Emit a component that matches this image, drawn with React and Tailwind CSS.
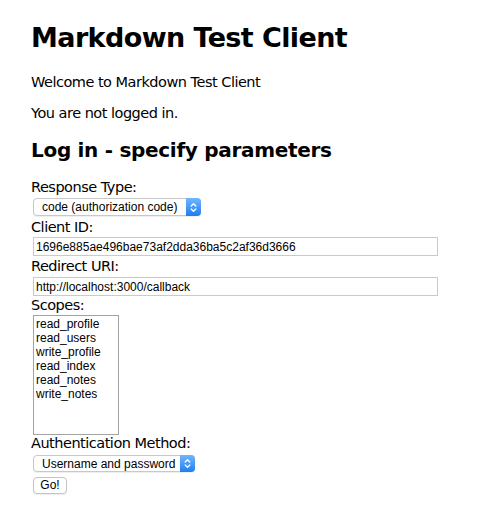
import React from 'react';

const scopes = ['read_profile', 'read_users', 'write_profile', 'read_index', 'read_notes', 'write_notes'];

function Arrows() {
  return (
    <span className="absolute -right-px -top-px -bottom-px w-[15px] rounded-r-[4px] bg-gradient-to-b from-[#6fb6fc] to-[#1a7ef5] flex items-center justify-center pointer-events-none">
      <svg width="7" height="11" viewBox="0 0 7 11" fill="none" stroke="white" strokeWidth="1.3" strokeLinecap="round" strokeLinejoin="round">
        <path d="M1.2 4 L3.5 1.7 L5.8 4" />
        <path d="M1.2 7 L3.5 9.3 L5.8 7" />
      </svg>
    </span>
  );
}

// fake mac-style popup button
function Select({ value, className }) {
  return (
    <div
      role="combobox"
      className={`relative ml-[2px] flex items-center rounded-[4px] border border-[#c8c8c8] bg-white pl-[8px] text-[12px] text-black shadow-[0_1px_1px_rgba(0,0,0,0.07)] font-['Liberation_Sans',Arial,sans-serif] ${className}`}
    >
      <span className="leading-[14px]">{value}</span>
      <Arrows />
    </div>
  );
}

function Label({ children, className = '' }) {
  return <div className={`h-[19px] leading-[19px] text-[14.5px] tracking-[-0.5px] ${className}`}>{children}</div>;
}

function TextInput({ value, className = '' }) {
  return (
    <input
      readOnly
      value={value}
      className={`block ml-[2px] w-[405px] h-[19px] border border-[#cacaca] px-[2px] text-[12px] text-black outline-none font-['Liberation_Sans',Arial,sans-serif] ${className}`}
    />
  );
}

export default function App() {
  return (
    <div className="min-h-screen bg-white text-black px-[31px] font-['DejaVu_Sans','Verdana',sans-serif]">
      <h1 className="pt-[22px] text-[27px] leading-[32px] font-bold tracking-[-0.6px]">Markdown Test Client</h1>
      <p className="mt-[19px] text-[14.5px] leading-[18px] tracking-[-0.5px]">Welcome to Markdown Test Client</p>
      <p className="mt-[13px] text-[14.5px] leading-[18px] tracking-[-0.5px]">You are not logged in.</p>
      <h2 className="mt-[16px] text-[20px] leading-[24px] font-bold tracking-[-0.3px]">Log in - specify parameters</h2>

      <form className="mt-[16px]" onSubmit={(e) => e.preventDefault()}>
        <Label>Response Type:</Label>
        <Select value="code (authorization code)" className="mt-px w-[168px] h-[18px]" />
        <Label className="mt-[2px]">Client ID:</Label>
        <TextInput value="1696e885ae496bae73af2dda36ba5c2af36d3666" />
        <Label className="mt-px">Redirect URI:</Label>
        <TextInput value="http://localhost:3000/callback" className="mt-px" />
        <Label>Scopes:</Label>
        <div className="ml-[2px] w-[86px] h-[120px] border border-[#a3a3a3] pt-px px-[2px] font-['Liberation_Sans',Arial,sans-serif] text-[12px] leading-[14px]">
          {scopes.map((s) => (
            <div key={s}>{s}</div>
          ))}
        </div>
        <Label className="-mt-px">Authentication Method:</Label>
        <Select value="Username and password" className="mt-[2px] w-[162px] h-[17px]" />
        <button
          type="submit"
          className="block mt-[5px] ml-[2px] w-[34px] h-[17px] rounded-[4px] border border-[#c4c4c4] bg-white text-[12px] leading-[15px] shadow-[0_1px_1px_rgba(0,0,0,0.07)] font-['Liberation_Sans',Arial,sans-serif]"
        >
          Go!
        </button>
      </form>
    </div>
  );
}
